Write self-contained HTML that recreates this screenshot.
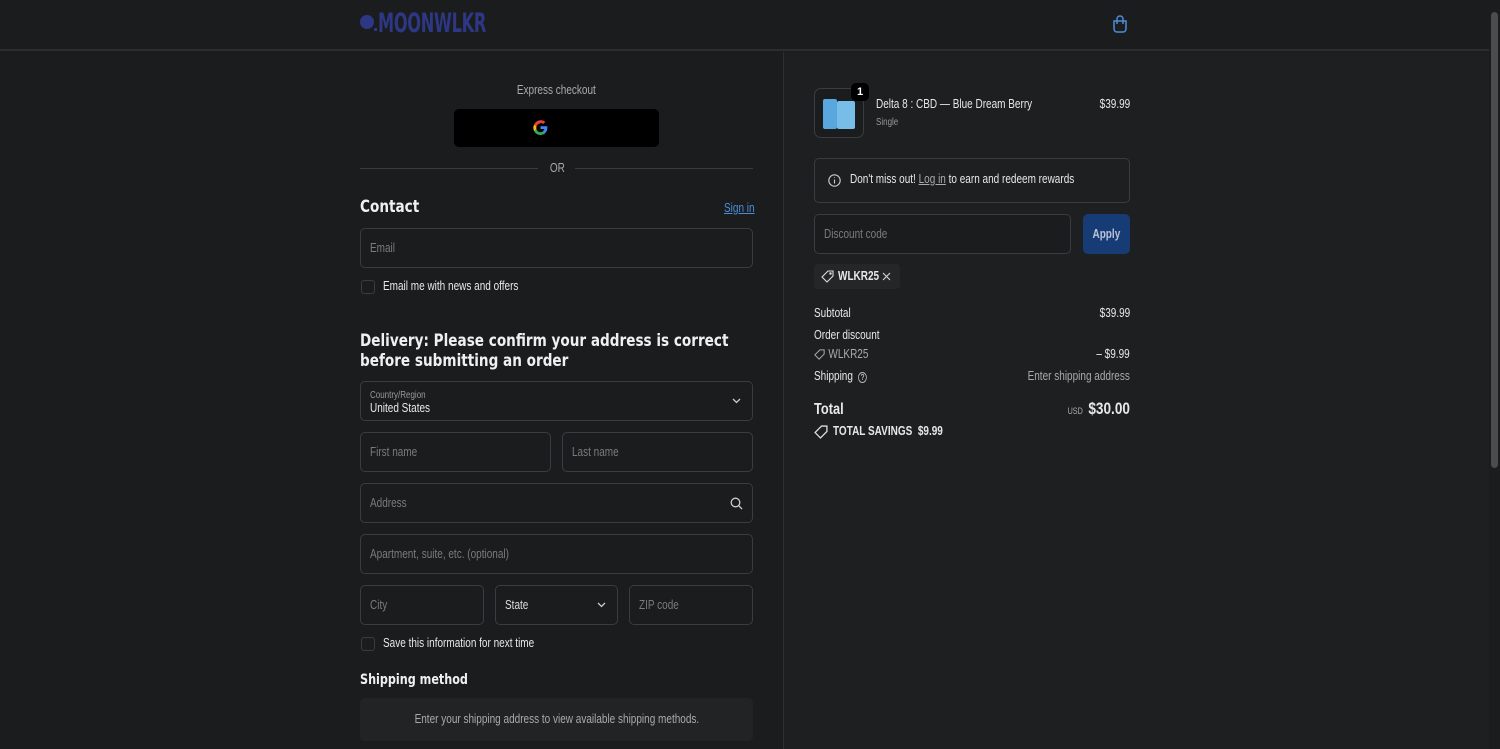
<!DOCTYPE html>
<html><head><meta charset="utf-8">
<style>
*{box-sizing:border-box;margin:0;padding:0}
body{width:1500px;height:749px;overflow:hidden;background:#1b1c1e;font-family:"Liberation Sans",sans-serif;color:#e8e8e8;position:relative;font-size:12px}
.a{position:absolute;white-space:nowrap}
.n{display:inline-block;transform:scaleX(.8);transform-origin:left center;white-space:nowrap;font-size:12.5px}
.nr{display:inline-block;transform:scaleX(.8);transform-origin:right center;white-space:nowrap;font-size:12.5px}
.nc{display:inline-block;transform:scaleX(.8);transform-origin:center center;white-space:nowrap;font-size:12.5px}
.hdr{left:0;top:0;width:1489px;height:51px;border-bottom:2px solid #2c2d2f}
.right{left:783px;top:52px;width:706px;height:697px;background:#1e1f21;border-left:1px solid #2e2f31}
.f{position:absolute;border:1px solid #3b3c3f;border-radius:5px;color:#7a7b7d;font-size:12px;padding-left:9px;display:flex;align-items:center}
.cb{position:absolute;width:14px;height:14px;border:1px solid #3b3c3f;border-radius:3px}
.h{font-family:"DejaVu Sans","Liberation Sans",sans-serif;font-weight:bold;color:#f0f0f0}
.h span{display:inline-block;transform:scaleX(.8);transform-origin:left center;white-space:nowrap}
.row{position:absolute;left:814px;width:316px;display:flex;justify-content:space-between;font-size:12px;color:#e8e8e8}
</style></head><body>
<div class="a hdr"></div>
<div class="a" style="left:360px;top:15px;width:14px;height:14px;border-radius:50%;background:#2d3784"></div>
<div class="a" style="left:374px;top:28px;width:3px;height:3px;background:#2d3784"></div>
<div class="a" style="left:378px;top:10px;font-family:'DejaVu Sans','Liberation Sans',sans-serif;font-weight:bold;color:#2d3784;font-size:27px;line-height:27px;letter-spacing:-0.5px;transform:scaleX(.6);transform-origin:left">MOONWLKR</div>
<svg class="a" style="left:1112px;top:15px" width="16" height="18" viewBox="0 0 16 18" fill="none" stroke="#4a8fd6" stroke-width="1.5"><path d="M2 6h12v8a3 3 0 0 1-3 3H5a3 3 0 0 1-3-3z"/><path d="M5 9V4a3 3 0 0 1 6 0v5"/></svg>
<div class="a" style="left:1489px;top:0;width:11px;height:749px;background:#1b1c1e"></div>
<div class="a" style="left:1491px;top:12px;width:7px;height:456px;background:#4b4c4e;border-radius:4px"></div>
<div class="a right"></div>

<div class="a" style="left:360px;top:83px;width:393px;text-align:center;color:#aaa"><span class="nc">Express checkout</span></div>
<div class="a" style="left:454px;top:109px;width:205px;height:38px;background:#000;border-radius:5px"></div>
<svg class="a" style="left:533px;top:120px" width="15" height="15" viewBox="0 0 24 24"><path fill="#4285F4" d="M23 12.3c0-.8-.1-1.6-.2-2.3H12v4.4h6.2a5.3 5.3 0 0 1-2.3 3.5v2.9h3.7c2.2-2 3.4-5 3.4-8.5z"/><path fill="#34A853" d="M12 24c3.1 0 5.7-1 7.6-2.8l-3.7-2.9c-1 .7-2.3 1.1-3.9 1.1-3 0-5.5-2-6.4-4.7H1.8v3A11.5 11.5 0 0 0 12 24z"/><path fill="#FBBC05" d="M5.6 14.7a6.9 6.9 0 0 1 0-4.4v-3H1.8a11.5 11.5 0 0 0 0 10.4z"/><path fill="#EA4335" d="M12 4.6c1.7 0 3.2.6 4.4 1.7l3.3-3.3A11.5 11.5 0 0 0 1.8 7.3l3.8 3c.9-2.7 3.4-4.7 6.4-4.7z"/></svg>
<div class="a" style="left:360px;top:168px;width:178px;height:1px;background:#3a3b3d"></div>
<div class="a" style="left:575px;top:168px;width:178px;height:1px;background:#3a3b3d"></div>
<div class="a" style="left:540px;top:161px;width:34px;text-align:center;color:#aaa"><span class="nc">OR</span></div>

<div class="a h" style="left:360px;top:197px;font-size:17px"><span>Contact</span></div>
<div class="a" style="left:724px;top:201px;color:#4a8fd6"><span class="n" style="text-decoration:underline">Sign in</span></div>
<div class="f" style="left:360px;top:228px;width:393px;height:40px"><span class="n">Email</span></div>
<div class="cb" style="left:361px;top:280px"></div>
<div class="a" style="left:383px;top:279px"><span class="n">Email me with news and offers</span></div>

<div class="a h" style="left:360px;top:331px;font-size:17px;line-height:20px"><span>Delivery: Please confirm your address is correct</span><br><span>before submitting an order</span></div>
<div class="f" style="left:360px;top:381px;width:393px;height:40px;flex-direction:column;align-items:flex-start;justify-content:center">
<div style="color:#999"><span class="n" style="font-size:10px">Country/Region</span></div><div style="color:#e8e8e8"><span class="n">United States</span></div></div>
<svg class="a" style="left:732px;top:398px" width="9" height="6" viewBox="0 0 9 6" fill="none" stroke="#ccc" stroke-width="1.3"><path d="M1 1l3.5 3.5L8 1"/></svg>
<div class="f" style="left:360px;top:432px;width:191px;height:40px"><span class="n">First name</span></div>
<div class="f" style="left:562px;top:432px;width:191px;height:40px"><span class="n">Last name</span></div>
<div class="f" style="left:360px;top:483px;width:393px;height:40px"><span class="n">Address</span></div>
<svg class="a" style="left:730px;top:497px" width="13" height="13" viewBox="0 0 13 13" fill="none" stroke="#ccc" stroke-width="1.3"><circle cx="5.5" cy="5.5" r="4.3"/><path d="M8.7 8.7L12 12"/></svg>
<div class="f" style="left:360px;top:534px;width:393px;height:40px"><span class="n">Apartment, suite, etc. (optional)</span></div>
<div class="f" style="left:360px;top:585px;width:124px;height:40px"><span class="n">City</span></div>
<div class="f" style="left:495px;top:585px;width:123px;height:40px;color:#ddd"><span class="n">State</span></div>
<svg class="a" style="left:597px;top:602px" width="9" height="6" viewBox="0 0 9 6" fill="none" stroke="#ccc" stroke-width="1.3"><path d="M1 1l3.5 3.5L8 1"/></svg>
<div class="f" style="left:629px;top:585px;width:124px;height:40px"><span class="n">ZIP code</span></div>
<div class="cb" style="left:361px;top:637px"></div>
<div class="a" style="left:383px;top:636px"><span class="n">Save this information for next time</span></div>
<div class="a h" style="left:360px;top:672px;font-size:14px"><span>Shipping method</span></div>
<div class="a" style="left:360px;top:698px;width:393px;height:43px;background:#222325;border-radius:5px;color:#aaa;text-align:center;line-height:43px"><span class="nc">Enter your shipping address to view available shipping methods.</span></div>

<!-- right -->
<div class="a" style="left:814px;top:88px;width:50px;height:50px;border:1px solid #3b3c3f;border-radius:7px;background:#1b1c1e;overflow:hidden">
<div style="position:absolute;left:8px;top:10px;width:14px;height:30px;background:#5aa7df;border-radius:2px"></div>
<div style="position:absolute;left:22px;top:12px;width:18px;height:28px;background:#78bde8;border-radius:2px"></div>
</div>
<div class="a" style="left:851px;top:83px;width:18px;height:18px;background:#000;border-radius:5px;color:#fff;font-size:11px;font-weight:bold;text-align:center;line-height:18px">1</div>
<div class="a" style="left:876px;top:97px"><span class="n">Delta 8 : CBD — Blue Dream Berry</span></div>
<div class="a" style="left:876px;top:114px;color:#999"><span class="n" style="font-size:10px">Single</span></div>
<div class="a" style="left:1070px;top:97px;width:60px;text-align:right"><span class="nr">$39.99</span></div>

<div class="a" style="left:814px;top:158px;width:316px;height:45px;border:1px solid #3b3c3f;border-radius:5px"></div>
<svg class="a" style="left:828px;top:174px" width="13" height="13" viewBox="0 0 13 13" fill="none" stroke="#ccc" stroke-width="1.1"><circle cx="6.5" cy="6.5" r="5.7"/><path d="M6.5 5.5v4M6.5 3.4v.6"/></svg>
<div class="a" style="left:850px;top:172px"><span class="n">Don't miss out! <span style="color:#aaa;text-decoration:underline">Log in</span> to earn and redeem rewards</span></div>
<div class="f" style="left:814px;top:214px;width:257px;height:40px;background:#1b1c1e"><span class="n">Discount code</span></div>
<div class="a" style="left:1083px;top:214px;width:47px;height:40px;background:#173c75;border-radius:5px;color:#b8c4d8;font-weight:bold;text-align:center;line-height:40px"><span class="nc">Apply</span></div>
<div class="a" style="left:814px;top:264px;width:86px;height:25px;background:#252628;border-radius:4px"></div>
<svg class="a" style="left:821px;top:270px" width="13" height="13" viewBox="0 0 13 13" fill="none" stroke="#ddd" stroke-width="1.1"><path d="M7 1h5v5l-6 6-5-5z"/><circle cx="9.5" cy="3.5" r=".7"/></svg>
<div class="a" style="left:838px;top:269px;font-weight:bold"><span class="n">WLKR25</span></div>
<svg class="a" style="left:882px;top:272px" width="9" height="9" viewBox="0 0 9 9" stroke="#ccc" stroke-width="1.2"><path d="M1 1l7 7M8 1L1 8"/></svg>

<div class="row" style="top:306px"><span class="n">Subtotal</span><span class="nr">$39.99</span></div>
<div class="row" style="top:328px"><span class="n">Order discount</span></div>
<div class="row" style="top:347px;color:#aaa"><span class="n" style="padding-left:18px">WLKR25</span><span class="nr" style="color:#e8e8e8">– $9.99</span></div>
<svg class="a" style="left:814px;top:349px" width="11" height="11" viewBox="0 0 13 13" fill="none" stroke="#aaa" stroke-width="1.2"><path d="M7 1h5v5l-6 6-5-5z"/></svg>
<div class="row" style="top:369px"><span class="n">Shipping <span style="display:inline-block;width:11px;height:11px;border:1px solid #bbb;border-radius:50%;font-size:8px;text-align:center;line-height:10px;margin-left:3px">?</span></span><span class="nr" style="color:#aaa">Enter shipping address</span></div>
<div class="row" style="top:399px;align-items:baseline"><span class="n" style="font-size:16px;font-weight:bold">Total</span><span class="nr"><span style="font-size:9px;color:#aaa">USD</span>&nbsp; <span style="font-size:17px;font-weight:bold">$30.00</span></span></div>
<svg class="a" style="left:814px;top:425px" width="14" height="14" viewBox="0 0 13 13" fill="none" stroke="#ddd" stroke-width="1.2"><path d="M7 1h5v5l-6 6-5-5z"/></svg>
<div class="a" style="left:833px;top:424px;font-weight:bold"><span class="n">TOTAL SAVINGS&nbsp; $9.99</span></div>
</body></html>
